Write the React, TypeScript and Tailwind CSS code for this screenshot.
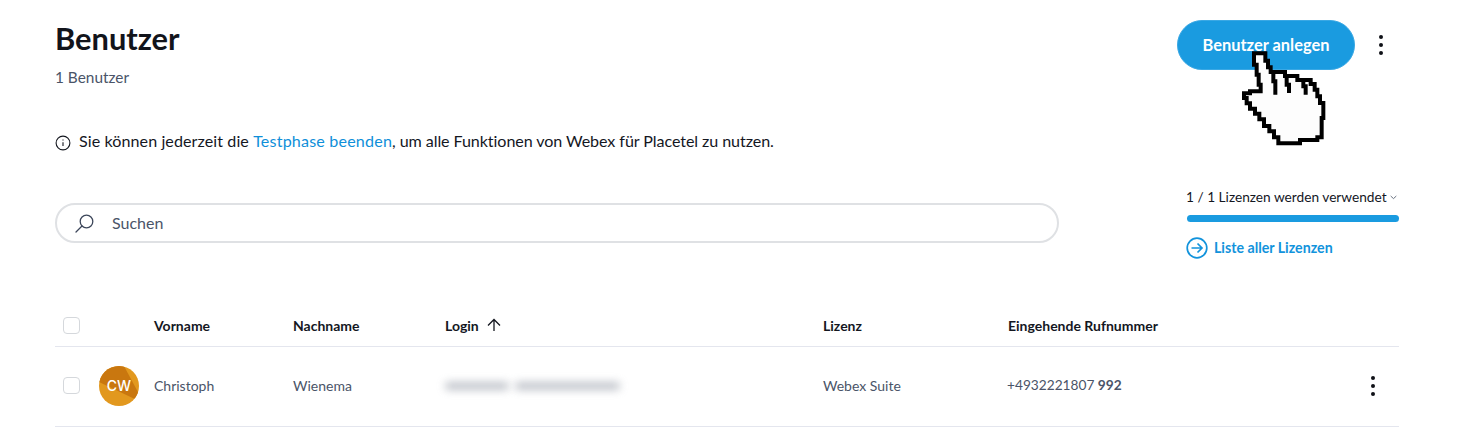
import React from "react";

const font = { fontFamily: "Lato, 'Open Sans', sans-serif" };

function Hand() {
  const d = "M42 16H76V38H84V58H92V72H135V84H172V96H212V108H224V125H232V145H240V165H250V210H245V268H232V276H180V286H115V268H102V250H88V234H72V214H58V197H45V182H30V166H20V150H12V136H30V130H62V110H56V80H50V50H42V16Z";
  return (
    <svg className="absolute left-[1240px] top-[48px] pointer-events-none" width="90" height="100" viewBox="0 0 270 300">
      <path d={d} fill="#fdfdfd" stroke="#000" strokeWidth="12" strokeLinejoin="miter" />
      <path d="M100 75V100H106V140M140 88V110H147V135M190 98V115H197V140" fill="none" stroke="#000" strokeWidth="12" />
    </svg>
  );
}

function Dots({ className = "" }: { className?: string }) {
  return (
    <div className={`flex flex-col gap-[4px] ${className}`}>
      <span className="w-[4px] h-[4px] rounded-full bg-[#0f1117]" />
      <span className="w-[4px] h-[4px] rounded-full bg-[#0f1117]" />
      <span className="w-[4px] h-[4px] rounded-full bg-[#0f1117]" />
    </div>
  );
}

function Check() {
  return <span className="block w-[17px] h-[17px] rounded-[4px] border border-[#d5d8dc] bg-white" />;
}

function Th({ className, children }: { className: string; children: React.ReactNode }) {
  return <div className={`text-[14px] font-bold text-[#14171f] ${className}`}>{children}</div>;
}

export default function App() {
  return (
    <div className="relative w-[1457px] h-[430px] overflow-hidden bg-white pl-[55px] pr-[58px] pt-[20px]" style={font}>
      <div className="flex items-start justify-between">
        <div>
          <h1 className="text-[30.8px] leading-[38px] font-bold text-[#12141b]">Benutzer</h1>
          <p className="mt-[10px] text-[15.4px] leading-[18px] text-[#4a5468]">1 Benutzer</p>
        </div>
        <div className="flex items-center gap-[24px] pr-[16px]">
          <button className="w-[178px] h-[50px] rounded-full bg-[#1a9be0] border border-[#3aa8e4] text-white text-[16.4px] font-bold">Benutzer anlegen</button>
          <Dots />
        </div>
      </div>

      <div className="mt-[45px] flex items-center gap-[8px] text-[16.1px] leading-[20px] text-[#14171f]">
        <svg width="16" height="16" viewBox="0 0 16 16" fill="none" stroke="#14171f" strokeWidth="1.1" className="mt-[4px]">
          <circle cx="8" cy="8" r="6.9" />
          <path d="M8 7.2v3.8M8 4.6v1" />
        </svg>
        <p>
          <span className="tracking-[0.08px]">Sie können jederzeit die </span>
          <span className="text-[#0f8fd9] tracking-[0.18px]">Testphase beenden</span>
          <span className="tracking-[-0.08px]">, um alle Funktionen von Webex für Placetel zu nutzen.</span>
        </p>
      </div>

      <div className="mt-[37px] flex items-start justify-between">
        <div className="mt-[15px] w-[1004px] h-[40px] rounded-full border-2 border-[#dfe1e4] flex items-center pl-[17px] gap-[17px]">
          <svg width="21" height="21" viewBox="0 0 21 21" fill="none" stroke="#3c465a" strokeWidth="1.3">
            <circle cx="12.5" cy="8.5" r="6.3" />
            <path d="M8 13L2 19" strokeLinecap="round" />
          </svg>
          <span className="text-[16px] text-[#4a5468]">Suchen</span>
        </div>
        <div className="w-[212px]">
          <div className="flex items-center gap-[3px] text-[13.7px] leading-[18px] text-[#14171f] -ml-[1px]">
            <span>1 / 1 Lizenzen werden verwendet</span>
            <svg width="7" height="5" viewBox="0 0 7 5" fill="none" stroke="#5a6374" strokeWidth="0.9"><path d="M.7 1l2.8 2.6L6.3 1" /></svg>
          </div>
          <div className="mt-[9px] h-[7px] rounded-full bg-[#1a9be0]" />
          <div className="mt-[15px] -ml-[1px] flex items-center gap-[6px] text-[14.2px] font-bold text-[#1293dc]">
            <svg width="22" height="22" viewBox="0 0 22 22" fill="none" stroke="#1293dc" strokeWidth="1.7">
              <circle cx="11" cy="11" r="9.8" />
              <path d="M5.5 11h10.5M11.5 6.5L16 11l-4.5 4.5" />
            </svg>
            <span>Liste aller Lizenzen</span>
          </div>
        </div>
      </div>

      <div className="mt-[45px] h-[43px] border-b border-[#e4e6ee] flex items-center pl-[8px]">
        <Check />
        <Th className="ml-[74px] w-[139px]">Vorname</Th>
        <Th className="w-[152px]">Nachname</Th>
        <Th className="w-[378px] flex items-center gap-[8px]">
          <span>Login</span>
          <svg width="14" height="14" viewBox="0 0 14 14" fill="none" stroke="#14171f" strokeWidth="1.3"><path d="M7 13V1.5M1 7.5l6-6 6 6" /></svg>
        </Th>
        <Th className="w-[185px]">Lizenz</Th>
        <Th>Eingehende Rufnummer</Th>
      </div>

      <div className="h-[80px] border-b border-[#e4e6ee] flex items-center pl-[8px] pb-[2px] text-[14px] text-[#4a5468]">
        <Check />
        <div className="ml-[19px] w-[40px] h-[40px] rounded-full overflow-hidden relative flex items-center justify-center bg-[#e2981e]">
          <svg className="absolute inset-0" width="40" height="40" viewBox="0 0 40 40">
            <path d="M0 0H25L40 28V35L0 16Z" fill="#c9770f" />
          </svg>
          <span className="relative text-white text-[14px] font-medium" style={{ fontFamily: "Inter, sans-serif" }}>CW</span>
        </div>
        <div className="ml-[15px] w-[139px]">Christoph</div>
        <div className="w-[152px]">Wienema</div>
        <div className="w-[378px] flex gap-[6px]">
          <span className="block w-[64px] h-[8px] rounded-full bg-[#a4a9b3] blur-[4px] opacity-70" />
          <span className="block w-[105px] h-[8px] rounded-full bg-[#a4a9b3] blur-[4px] opacity-70" />
        </div>
        <div className="w-[184px]">Webex Suite</div>
        <div className="w-[364px] text-[13.7px]">+4932221807 <span className="font-bold">992</span></div>
        <Dots />
      </div>

      <Hand />
    </div>
  );
}
